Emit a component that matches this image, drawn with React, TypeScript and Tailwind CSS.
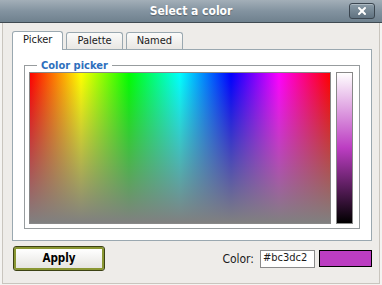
import { X } from "lucide-react";

const font = { fontFamily: '"DejaVu Sans Condensed", "Liberation Sans", sans-serif' };

export default function App() {
  return (
    <div
      className="w-[382px] h-[285px] flex flex-col bg-[#f4f3f1] text-[11px] text-[#1a1a1a] overflow-hidden"
      style={font}
    >
      {/* title bar */}
      <div className="h-[23px] shrink-0 flex items-center relative bg-gradient-to-b from-[#a3afb8] via-[#8393a0] to-[#6f818e] border-b border-[#3f4a52]">
        <div className="flex-1 text-center text-white font-bold text-[12px] [text-shadow:0_1px_1px_rgba(0,0,0,0.3)]">
          Select a color
        </div>
        <button className="absolute right-[7px] top-[3px] w-[26px] h-[16px] rounded-[3px] border border-[#3b4650] bg-gradient-to-b from-[#8b9ca8] to-[#607280] flex items-center justify-center shadow-[inset_0_1px_0_rgba(255,255,255,0.3)]">
          <X size={12} strokeWidth={4} className="text-white" />
        </button>
      </div>

      {/* body */}
      <div className="flex-1 mx-[2px] mb-[1px] border-x border-b border-[#c9c5be] bg-[#eeece9] flex flex-col px-[9px]">
        {/* tabs */}
        <div className="flex items-end mt-[7px] gap-[3px] h-[19px]">
          <div className="h-[19px] px-[10px] flex items-center bg-white border border-b-0 border-[#9aa8b0] rounded-t-[3px] relative top-[1px] z-10 pb-[1px]">
            Picker
          </div>
          <div className="h-[17px] px-[10px] flex items-center bg-gradient-to-b from-[#fbfbfa] to-[#e9e7e3] border border-b-0 border-[#9aa8b0] rounded-t-[3px]">
            Palette
          </div>
          <div className="h-[17px] px-[10px] flex items-center bg-gradient-to-b from-[#fbfbfa] to-[#e9e7e3] border border-b-0 border-[#9aa8b0] rounded-t-[3px]">
            Named
          </div>
        </div>

        {/* panel */}
        <div className="h-[192px] w-[360px] bg-white border border-[#9aa8b0] px-[11px] pt-[9px]">
          <fieldset className="border border-[#979c9e] px-[4px] pb-[4px]">
            <legend className="ml-[8px] px-[4px] text-[#2e6fbd] font-bold text-[11px] leading-[13px]">
              Color picker
            </legend>
            <div className="flex gap-[5px]">
              <div className="relative w-[302px] h-[152px] border border-[#888]">
                <div className="absolute inset-0 bg-[linear-gradient(to_right,#ff0000,#ffff00_17%,#00ff00_33%,#00ffff_50%,#0000ff_67%,#ff00ff_83%,#ff0000)]" />
                <div className="absolute inset-0 bg-gradient-to-b from-[rgba(128,128,128,0)] to-[#808080]" />
              </div>
              <div className="w-[17px] h-[152px] border border-[#888] bg-[linear-gradient(to_bottom,#ffffff,#bc3dc2_50%,#000000)]" />
            </div>
          </fieldset>
        </div>

        {/* footer */}
        <div className="flex items-center mt-[6px]">
          <button className="ml-[2px] w-[90px] h-[23px] rounded-[2px] border-2 border-[#8a9733] outline outline-1 outline-[#3c4214] bg-gradient-to-b from-white to-[#e6e5e1] font-bold text-[11.5px] text-black">
            Apply
          </button>
          <div className="flex-1" />
          <span className="text-[12px] mr-[6px]">Color:</span>
          <div className="w-[55px] h-[18px] border border-[#8a8a8a] bg-white flex items-center px-[2px] text-[11px]">
            #bc3dc2
          </div>
          <div className="ml-[4px] w-[53px] h-[17px] border border-black bg-[#bc3dc2] mr-[-2px]" />
        </div>
      </div>
    </div>
  );
}
